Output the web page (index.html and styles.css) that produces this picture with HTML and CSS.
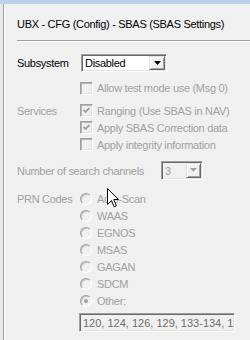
FILE: index.html
```html
<!DOCTYPE html>
<html lang="en">
<head>
  <meta charset="UTF-8" />
  <title>UBX - CFG - SBAS</title>
  <link rel="stylesheet" href="styles.css">
</head>
<body>
  <div class="window">
    <div class="panel">
      <h1 class="title">UBX - CFG (Config) - SBAS (SBAS Settings)</h1>
      <div class="sep"></div>

      <div class="form">
        <div class="row row-subsystem">
          <span class="label on">Subsystem</span>
          <div class="combo">
            <span class="combo-text">Disabled</span>
            <span class="combo-btn">
              <svg width="7" height="4" viewBox="0 0 7 4"><polygon points="0,0 7,0 3.5,4" fill="#000"/></svg>
            </span>
          </div>
        </div>

        <div class="row row-allow">
          <span class="label"></span>
          <span class="check"></span>
          <span class="text">Allow test mode use (Msg 0)</span>
        </div>

        <div class="row row-first">
          <span class="label">Services</span>
          <span class="check">
            <svg width="9" height="9" viewBox="0 0 9 9"><path d="M1.5 4 L3.5 6 L7.5 2" fill="none" stroke="#a0a0a0" stroke-width="1.8"/></svg>
          </span>
          <span class="text">Ranging (Use SBAS in NAV)</span>
        </div>
        <div class="row">
          <span class="label"></span>
          <span class="check">
            <svg width="9" height="9" viewBox="0 0 9 9"><path d="M1.5 4 L3.5 6 L7.5 2" fill="none" stroke="#a0a0a0" stroke-width="1.8"/></svg>
          </span>
          <span class="text">Apply SBAS Correction data</span>
        </div>
        <div class="row">
          <span class="label"></span>
          <span class="check"></span>
          <span class="text">Apply integrity information</span>
        </div>

        <div class="row row-channels">
          <span class="label label-wide">Number of search channels</span>
          <div class="combo combo-off">
            <span class="combo-text">3</span>
            <span class="combo-btn">
              <svg width="8" height="5" viewBox="0 0 8 5"><polygon points="1,1 8,1 4.5,5" fill="#fff"/><polygon points="0,0 7,0 3.5,4" fill="#a0a0a0"/></svg>
            </span>
          </div>
        </div>

        <div class="row row-prn">
          <span class="label">PRN Codes</span>
          <span class="radio"></span>
          <span class="text">Auto-Scan</span>
        </div>
        <div class="row">
          <span class="label"></span>
          <span class="radio"></span>
          <span class="text">WAAS</span>
        </div>
        <div class="row">
          <span class="label"></span>
          <span class="radio"></span>
          <span class="text">EGNOS</span>
        </div>
        <div class="row">
          <span class="label"></span>
          <span class="radio"></span>
          <span class="text">MSAS</span>
        </div>
        <div class="row">
          <span class="label"></span>
          <span class="radio"></span>
          <span class="text">GAGAN</span>
        </div>
        <div class="row">
          <span class="label"></span>
          <span class="radio"></span>
          <span class="text">SDCM</span>
        </div>
        <div class="row">
          <span class="label"></span>
          <span class="radio selected"></span>
          <span class="text">Other:</span>
        </div>

        <div class="edit"><span class="edit-text">120, 124, 126, 129, 133-134, 13</span></div>
      </div>
    </div>
  </div>

  <svg class="cursor" width="13" height="20" viewBox="0 0 13 20">
    <path d="M0.5 0.5 V16.5 L4.5 12.5 L7.2 18.8 L9.4 17.8 L6.8 11.5 H11.5 Z" fill="#fff" stroke="#000" stroke-width="1"/>
  </svg>
</body>
</html>
```

FILE: styles.css
```css
* {
  box-sizing: border-box;
}

body {
  margin: 0;
  font-family: "Liberation Sans", Arial, sans-serif;
  font-size: 11px;
  letter-spacing: -0.3px;
  color: #a0a0a0;
  background: #eaeaea;
}

.window {
  height: 340px;
  border-top: 4px solid #bcd2ea;
  padding-left: 3px;
  overflow: hidden;
}

.panel {
  height: 336px;
  background: #f0f0f0;
  border-left: 1px solid #a0a0a0;
  box-shadow: inset 1px 0 #fff;
  padding-left: 13px;
}

.title {
  margin: 0;
  padding-top: 13px;
  font-size: 11px;
  font-weight: normal;
  line-height: 14px;
  color: #000;
}

.sep {
  margin-top: 9px;
  height: 2px;
  border-top: 1px solid #a0a0a0;
  border-bottom: 1px solid #fff;
}

.form {
  margin-top: 12px;
}

.row {
  display: flex;
  align-items: center;
  height: 17px;
  white-space: nowrap;
}

.label {
  width: 63px;
  flex: none;
}

.label-wide {
  width: 144px;
}

.on {
  color: #000;
}

.row-subsystem {
  height: 18px;
}

.row-allow {
  margin-top: 8px;
  height: 16px;
}

.row-first {
  margin-top: 6px;
}

.row-channels {
  margin-top: 8px;
  height: 19px;
}

.row-prn {
  margin-top: 10px;
}

/* combo boxes */
.combo {
  display: flex;
  align-items: center;
  width: 86px;
  height: 18px;
  margin-left: 1px;
  padding: 2px;
  background: #fff;
  border: 1px solid;
  border-color: #a0a0a0 #fff #fff #a0a0a0;
  box-shadow: inset 1px 1px #696969, inset -1px -1px #e3e3e3;
}

.combo-text {
  flex: 1;
  padding-left: 1px;
  color: #000;
}

.combo-btn {
  display: flex;
  align-items: center;
  justify-content: center;
  width: 16px;
  height: 14px;
  margin-right: -1px;
  background: #f0f0f0;
  border: 1px solid;
  border-color: #e3e3e3 #696969 #696969 #e3e3e3;
  box-shadow: inset 1px 1px #fff, inset -1px -1px #a0a0a0;
}

.combo-off {
  width: 42px;
  height: 19px;
  margin-left: 0;
  background: #f0f0f0;
}

.combo-off .combo-text {
  color: #a0a0a0;
}

.combo-off .combo-btn {
  width: 15px;
  height: 15px;
}

/* check boxes and radios */
.check {
  display: flex;
  align-items: center;
  justify-content: center;
  width: 13px;
  height: 13px;
  flex: none;
  border: 1px solid;
  border-color: #a0a0a0 #fff #fff #a0a0a0;
  box-shadow: inset 1px 1px #b4b4b4, inset -1px -1px #e3e3e3;
}

.radio {
  position: relative;
  width: 12px;
  height: 12px;
  flex: none;
  border-radius: 50%;
  border: 1px solid;
  border-color: #a0a0a0 #fff #fff #a0a0a0;
  box-shadow: inset 1px 1px #c4c4c4;
}

.radio.selected::after {
  content: "";
  position: absolute;
  left: 3px;
  top: 3px;
  width: 4px;
  height: 4px;
  border-radius: 50%;
  background: #a0a0a0;
}

.text {
  margin-left: 4px;
}

.radio + .text {
  margin-left: 5px;
}

/* edit field */
.edit {
  width: 156px;
  height: 19px;
  margin-top: 4px;
  margin-left: 62px;
  padding: 2px 0 0 3px;
  line-height: 14px;
  color: #6d6d6d;
  background: #f0f0f0;
  border: 1px solid;
  border-color: #a0a0a0 #fff #fff #a0a0a0;
  box-shadow: inset 1px 1px #696969, inset -1px -1px #e3e3e3;
  white-space: nowrap;
  overflow: hidden;
}

.edit-text {
  letter-spacing: 0;
}

.cursor {
  position: absolute;
  left: 107px;
  top: 188px;
}
```
